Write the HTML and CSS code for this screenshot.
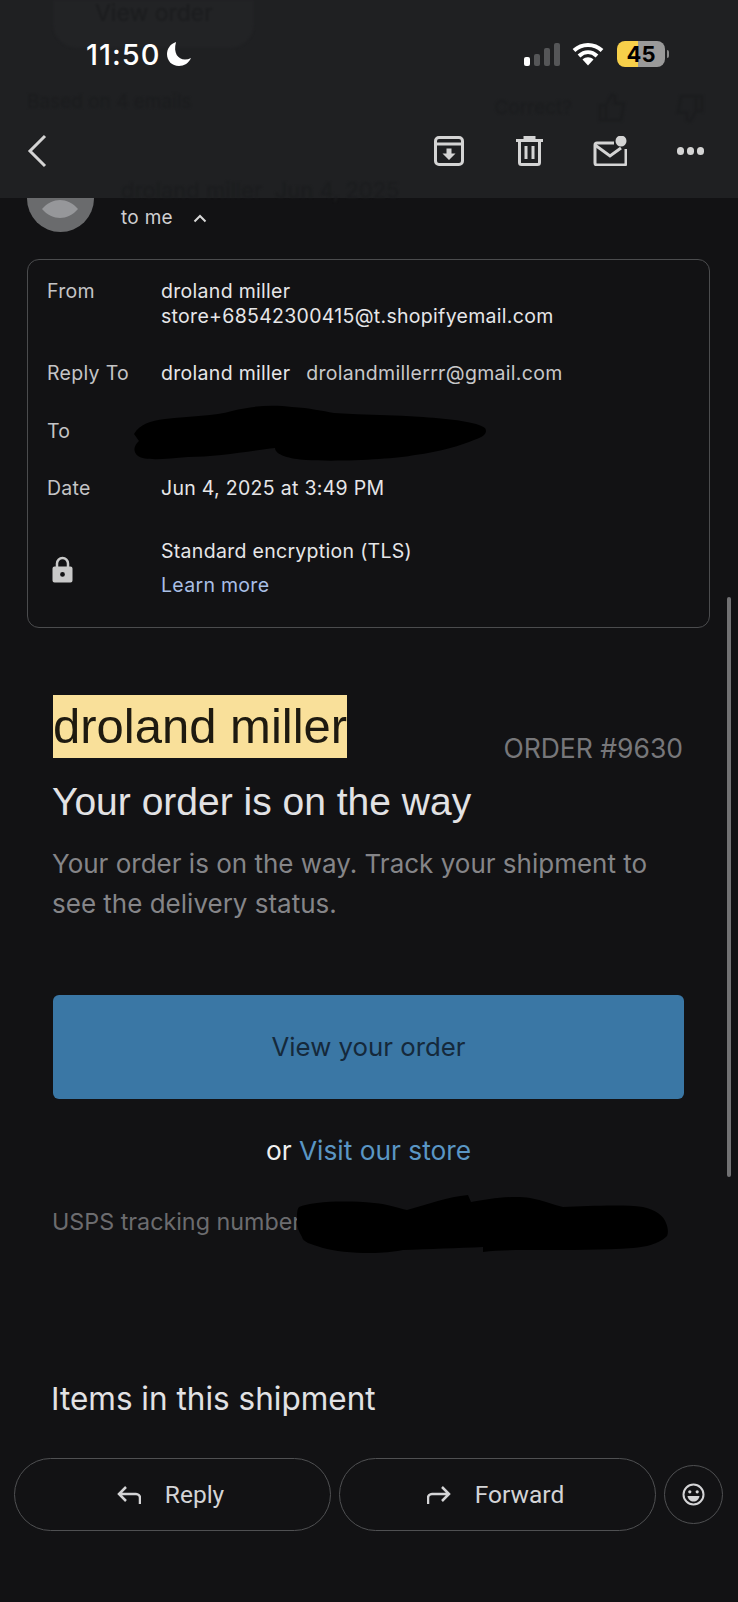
FILE: index.html
```html
<!DOCTYPE html>
<html lang="en">
<head>
  <meta charset="UTF-8" />
  <meta name="viewport" content="width=device-width, initial-scale=1.0"/>
  <title>Your order is on the way</title>
  <link rel="stylesheet" href="styles.css">
</head>
<body>
<div class="screen">

  <!-- top bar, sits over the scrolled mail -->
  <header class="topbar">
    <div class="ghost" aria-hidden="true">
      <div class="ghost-pill">View order</div>
      <div class="ghost-row ghost-summary">
        <span>Based on 4 emails</span>
        <span class="ghost-right">Correct?
          <svg width="36" height="36" viewBox="0 0 24 24"><path d="M4 10h4v10H4zM8 10l4-7 2 1v5h6l-2 11H8"/></svg>
          <svg class="ghost-down" width="36" height="36" viewBox="0 0 24 24"><path d="M20 14h-4V4h4zM16 14l-4 7-2-1v-5H4L6 4h10"/></svg>
        </span>
      </div>
      <div class="ghost-row ghost-sender">
        <span>droland miller &nbsp;Jun 4, 2025</span>
      </div>
    </div>

    <div class="statusbar">
      <div class="clock">
        <span>11:50</span>
        <svg width="26" height="26" viewBox="0 0 26 26"><path class="white" d="M10 1C4 3 1 8 1 13c0 7 5 12 12 12 5 0 10-3 12-8-2 1-4 1.500-6 1.500C12 18.500 7 12 10 1z"/></svg>
      </div>
      <div class="status-icons">
        <div class="signal">
          <i class="bar bar-on"></i><i class="bar bar-2"></i><i class="bar bar-3"></i><i class="bar bar-4"></i>
        </div>
        <svg class="wifi" width="32" height="24" viewBox="0 0 32 24">
          <path d="M2 8.500C10 1 22 1 30 8.500M7 14c5.500-5 12.500-5 18 0M11.500 18.500"/>
          <path class="wifi-fan" d="M16 23.500l-5.500-6c3-3 8-3 11 0z"/>
        </svg>
        <div class="battery"><span>45</span></div>
        <i class="battery-nub"></i>
      </div>
    </div>

    <div class="toolbar">
      <svg class="back" width="20" height="34" viewBox="0 0 20 34"><path d="M18 2L3 17l15 15"/></svg>
      <div class="actions">
        <svg class="archive" width="30" height="30" viewBox="0 0 30 30">
          <rect x="1.500" y="1.500" width="27" height="27" rx="3.500"/>
          <path d="M2 8h26"/>
          <path class="solid" d="M12.500 12.500h5v5h4l-6.500 6.500-6.500-6.500h4z"/>
        </svg>
        <svg width="27" height="30" viewBox="0 0 27 30">
          <path d="M0 4.500h27M9 4.500V1.500h9v3M3.500 4.500v22a2 2 0 0 0 2 2h16a2 2 0 0 0 2-2v-22M10 10v13M17 10v13"/>
        </svg>
        <svg width="34" height="30" viewBox="0 0 34 30">
          <path d="M21 7H4a2 2 0 0 0-2 2v18a2 2 0 0 0 2 2h27a2 2 0 0 0 2-2V13"/>
          <path d="M2 9l15 11 11-8"/>
          <circle class="solid" cx="28" cy="5" r="5.500"/>
        </svg>
        <div class="dots"><i></i><i></i><i></i></div>
      </div>
    </div>
  </header>

  <main class="mail">
    <div class="sender">
      <svg class="avatar" width="67" height="67" viewBox="0 0 67 67">
        <circle cx="33.500" cy="33.500" r="33.500" fill="#6a6b6d"/>
        <path d="M15 44c5-6 12-9 18-9s13 3 18 9c-5 6-12 9-18 9s-13-3-18-9z" fill="#96979a"/>
      </svg>
      <div class="to-me">to me
        <svg width="14" height="9" viewBox="0 0 14 9"><path d="M1.500 7.500L7 2l5.500 5.500"/></svg>
      </div>
    </div>

    <section class="details">
      <div class="detail-row">
        <div class="detail-label">From</div>
        <div class="detail-value">droland miller<br>store+68542300415@t.shopifyemail.com</div>
      </div>
      <div class="detail-row">
        <div class="detail-label">Reply To</div>
        <div class="detail-value">droland miller <span class="reply-mail">drolandmillerrr@gmail.com</span></div>
      </div>
      <div class="detail-row">
        <div class="detail-label">To</div>
        <div class="detail-value"></div>
      </div>
      <div class="detail-row">
        <div class="detail-label">Date</div>
        <div class="detail-value">Jun 4, 2025 at 3:49 PM</div>
      </div>
      <div class="detail-row encrypt-row">
        <div class="detail-label lock">
          <svg width="21" height="27" viewBox="0 0 21 27">
            <path class="shackle" d="M5 12V7.500a5.500 5.500 0 0 1 11 0V12"/>
            <path class="body" fill-rule="evenodd" d="M2.500 10.500h16a2 2 0 0 1 2 2v12a2 2 0 0 1-2 2h-16a2 2 0 0 1-2-2v-12a2 2 0 0 1 2-2zM10.500 16a2.400 2.400 0 1 0 0 4.800 2.400 2.400 0 0 0 0-4.800z"/>
          </svg>
        </div>
        <div class="detail-value encrypt">
          <div>Standard encryption (TLS)</div>
          <a class="learn" href="#">Learn more</a>
        </div>
      </div>
      <svg class="scribble scribble-to" width="357" height="60" viewBox="132 405 357 60">
        <path d="M134 435C140 425 150 422 165 420 190 417 215 417 232 412 255 406 275 406 292 408 310 409 322 412 334 414 365 416 395 416 423 418 450 420 478 423 485 429 488 434 484 438 474 441 462 446 440 453 415 456 395 460 340 463 306 461 290 460 275 456 275 449 250 452 215 458 188 458 165 460 145 462 138 457 131 451 136 445 139 442z"/>
      </svg>
    </section>

    <section class="order">
      <div class="order-head">
        <div class="shop-name">droland miller</div>
        <div class="order-no">ORDER #9630</div>
      </div>
      <h1>Your order is on the way</h1>
      <p class="order-text">Your order is on the way. Track your shipment to see the delivery status.</p>
      <a class="view-btn" href="#">View your order</a>
      <div class="or-line">or <a href="#">Visit our store</a></div>
      <div class="tracking">USPS tracking number
        <svg class="scribble scribble-track" width="375" height="62" viewBox="297 1193 375 62">
          <path d="M301 1207C312 1202 345 1200 376 1203 390 1204 400 1208 409 1210 430 1204 450 1197 470 1195L473 1202C490 1199 515 1195 532 1198 545 1200 555 1205 565 1207 590 1206 625 1204 645 1207 658 1210 666 1216 668 1223 671 1230 670 1236 668 1237 660 1244 648 1247 635 1248 605 1250 570 1250 541 1250 520 1250 500 1250 485 1252L485 1247C460 1248 430 1249 405 1250 395 1252 385 1253 372 1253 355 1253 335 1251 325 1248 312 1244 305 1242 304 1237 300 1230 298 1225 299 1220 299 1214 299 1209 301 1207z"/>
        </svg>
      </div>
      <h2>Items in this shipment</h2>
    </section>
  </main>

  <div class="scrollbar"></div>

  <footer class="bottombar">
    <a class="pill-btn" href="#">
      <svg width="24" height="20" viewBox="0 0 24 20"><path d="M9 2L2 9l7 7M2 9h17a4 4 0 0 1 4 4v6"/></svg>
      Reply
    </a>
    <a class="pill-btn" href="#">
      <svg width="24" height="20" viewBox="0 0 24 20"><path d="M15 2l7 7-7 7M22 9H5a4 4 0 0 0-4 4v6"/></svg>
      Forward
    </a>
    <a class="smile-btn" href="#">
      <svg width="23" height="23" viewBox="0 0 23 23">
        <circle cx="11.500" cy="11.500" r="10"/>
        <circle class="solid" cx="7.800" cy="8.800" r="1.600"/>
        <circle class="solid" cx="15.200" cy="8.800" r="1.600"/>
        <path class="solid" d="M5.500 13h12c-.5 3.500-3 5.500-6 5.500s-5.500-2-6-5.500z"/>
      </svg>
    </a>
  </footer>
</div>
</body>
</html>
```

FILE: styles.css
```css
* { margin: 0; padding: 0; box-sizing: border-box; }

body {
  background: #121214;
  font-family: 'Inter', 'Liberation Sans', sans-serif;
  color: #e4e4e6;
}

a { text-decoration: none; color: inherit; }

.screen {
  position: relative;
  width: 738px;
  height: 1602px;
  overflow: hidden;
}

/* top bar */

.topbar {
  position: absolute;
  top: 0;
  left: 0;
  right: 0;
  height: 198px;
  background: #1f2022;
  z-index: 10;
}

.ghost {
  position: absolute;
  inset: 0;
  color: #1b1c1e;
  filter: blur(1.2px);
}

.ghost-pill {
  width: 201px;
  height: 48px;
  margin: 0 0 0 53px;
  padding: 0 0 12px 42px;
  background: #222325;
  border-radius: 0 0 24px 24px;
  font-size: 23px;
  line-height: 26px;
}

.ghost-row {
  display: flex;
  justify-content: space-between;
  font-size: 19px;
  line-height: 24px;
}

.ghost-summary {
  margin-top: 42px;
  padding: 0 30px 0 27px;
}

.ghost-right {
  display: flex;
  align-items: center;
  gap: 22px;
}

.ghost-right svg {
  fill: none;
  stroke: #1b1c1e;
  stroke-width: 1.500;
}

.ghost-right .ghost-down { margin-left: 20px; }

.ghost-sender {
  margin-top: 52px;
  padding-left: 121px;
  font-size: 22px;
}

.statusbar {
  position: relative;
  height: 121px;
  display: flex;
  justify-content: space-between;
  align-items: flex-start;
  padding: 38px 69px 0 86px;
}

.clock {
  display: flex;
  align-items: center;
  gap: 5px;
  height: 32px;
  font-size: 29px;
  font-weight: 500;
  letter-spacing: 1px;
  color: #fff;
}

.white { fill: #fff; }

.status-icons {
  display: flex;
  align-items: center;
  height: 32px;
}

.signal {
  display: flex;
  align-items: flex-end;
  gap: 4px;
  height: 23px;
  margin-right: 12px;
}

.bar {
  display: block;
  width: 6px;
  background: #555658;
  border-radius: 2px;
}

.bar-on { height: 9px; background: #fff; }
.bar-2 { height: 12px; }
.bar-3 { height: 18px; }
.bar-4 { height: 23px; }

.wifi { margin-right: 13px; }

.wifi path {
  fill: none;
  stroke: #fff;
  stroke-width: 4;
}

.wifi .wifi-fan {
  fill: #fff;
  stroke: none;
}

.battery {
  width: 48px;
  height: 26px;
  border-radius: 8px;
  background: linear-gradient(90deg, #f7d04a 0 21px, #9a9a9a 21px 100%);
  text-align: center;
  font-size: 22px;
  font-weight: 700;
  line-height: 26px;
  color: #000;
}

.battery-nub {
  display: block;
  width: 2px;
  height: 8px;
  margin-left: 2px;
  background: #8a8a8a;
  border-radius: 0 2px 2px 0;
}

.toolbar {
  position: relative;
  display: flex;
  justify-content: space-between;
  align-items: center;
  height: 60px;
  padding: 0 34px 0 27px;
}

.toolbar svg {
  fill: none;
  stroke: #d4d4d4;
  stroke-width: 3;
}

.toolbar .solid {
  fill: #d4d4d4;
  stroke: none;
}

.back { stroke-width: 3.500; }

.actions {
  display: flex;
  align-items: center;
  gap: 50px;
}

.archive { margin-right: 2px; }

.dots {
  display: flex;
  gap: 2.500px;
  width: 27px;
}

.dots i {
  display: block;
  width: 7.500px;
  height: 7.500px;
  border-radius: 50%;
  background: #d4d4d4;
}

/* mail */

.mail { padding-top: 165px; }

.sender {
  display: flex;
  align-items: flex-end;
  gap: 27px;
  padding-left: 27px;
}

.avatar { display: block; }

.to-me {
  display: flex;
  align-items: center;
  gap: 20px;
  margin-bottom: 2px;
  font-size: 19px;
  letter-spacing: 0.3px;
  line-height: 24px;
  color: #cfcfd1;
}

.to-me svg {
  fill: none;
  stroke: #d8d8d8;
  stroke-width: 2;
}

.details {
  position: relative;
  width: 683px;
  height: 369px;
  margin: 27px 0 0 27px;
  padding: 18.500px 0 0 19px;
  border: 1.500px solid #4b4c4e;
  border-radius: 12px;
  font-size: 19.500px;
  letter-spacing: 0.3px;
  line-height: 25px;
}

.detail-row {
  display: grid;
  grid-template-columns: 114px 1fr;
  min-height: 25px;
  margin-bottom: 32.500px;
}

.detail-label { color: #c4c4c6; }
.detail-value { color: #e6e6e8; }

.reply-mail {
  margin-left: 10px;
  color: #c8c8ca;
}

.encrypt-row {
  margin-top: 38px;
  align-items: center;
}

.lock {
  padding: 2px 0 0 5px;
  line-height: 0;
}

.shackle {
  fill: none;
  stroke: #c9c9c9;
  stroke-width: 2.500;
}

.body { fill: #c9c9c9; }

.learn {
  display: block;
  margin-top: 9px;
  color: #a9bfe6;
}

.scribble {
  position: absolute;
  fill: #000;
  pointer-events: none;
}

.scribble-to {
  left: 104px;
  top: 144px;
}

.order {
  padding: 67px 54px 0 53px;
}

.order-head {
  display: flex;
  justify-content: space-between;
  align-items: flex-start;
}

.shop-name {
  height: 63px;
  width: 294px;
  background: #f9e09a;
  color: #1e1a10;
  font-family: 'Liberation Sans', sans-serif;
  font-size: 49px;
  line-height: 63px;
  white-space: nowrap;
}

.order-no {
  margin: 37px 1px 0 0;
  font-size: 26.500px;
  line-height: 32px;
  color: #77777a;
}

h1 {
  margin: 16px 0 0 -1px;
  font-family: 'Liberation Sans', sans-serif;
  font-size: 39px;
  font-weight: 400;
  line-height: 44px;
  color: #e2e2e4;
}

.order-text {
  margin: 20px 0 0 -1px;
  font-size: 26px;
  line-height: 40px;
  color: #858588;
}

.view-btn {
  display: block;
  height: 104px;
  margin-top: 71px;
  background: #3a77a5;
  border-radius: 6px;
  text-align: center;
  font-size: 25.800px;
  line-height: 104px;
  color: #15293b;
}

.or-line {
  margin-top: 36px;
  text-align: center;
  font-size: 26.300px;
  line-height: 32px;
  color: #f0f0f0;
}

.or-line a { color: #5a96c4; }

.tracking {
  position: relative;
  margin: 40px 0 0 -1px;
  font-size: 23.300px;
  line-height: 30px;
  color: #6c6c6f;
}

.scribble-track {
  left: 243px;
  top: -14px;
}

h2 {
  margin: 142px 0 0 -2px;
  font-size: 31.500px;
  font-weight: 400;
  line-height: 40px;
  color: #e2e2e4;
}

.scrollbar {
  position: absolute;
  top: 597px;
  left: 727px;
  width: 4px;
  height: 580px;
  background: #717173;
  border-radius: 2px;
}

/* reply bar */

.bottombar {
  position: absolute;
  left: 0;
  right: 0;
  top: 1420px;
  bottom: 0;
  display: flex;
  align-items: flex-start;
  gap: 8px;
  padding: 38px 15px 0 14px;
  background: #121214;
}

.pill-btn {
  flex: 1;
  display: flex;
  justify-content: center;
  align-items: center;
  gap: 24px;
  height: 73px;
  padding-right: 4px;
  border: 1.500px solid #4f5052;
  border-radius: 37px;
  font-family: 'Roboto', sans-serif;
  font-size: 24.500px;
  font-weight: 400;
  color: #d4d4d6;
}

.pill-btn svg {
  fill: none;
  stroke: #d4d4d6;
  stroke-width: 2.500;
}

.smile-btn {
  flex: none;
  display: flex;
  justify-content: center;
  align-items: center;
  width: 59px;
  height: 59px;
  margin-top: 7px;
  border: 1.500px solid #4f5052;
  border-radius: 50%;
}

.smile-btn svg {
  fill: none;
  stroke: #d4d4d6;
  stroke-width: 2;
}

.smile-btn .solid {
  fill: #d4d4d6;
  stroke: none;
}
```
